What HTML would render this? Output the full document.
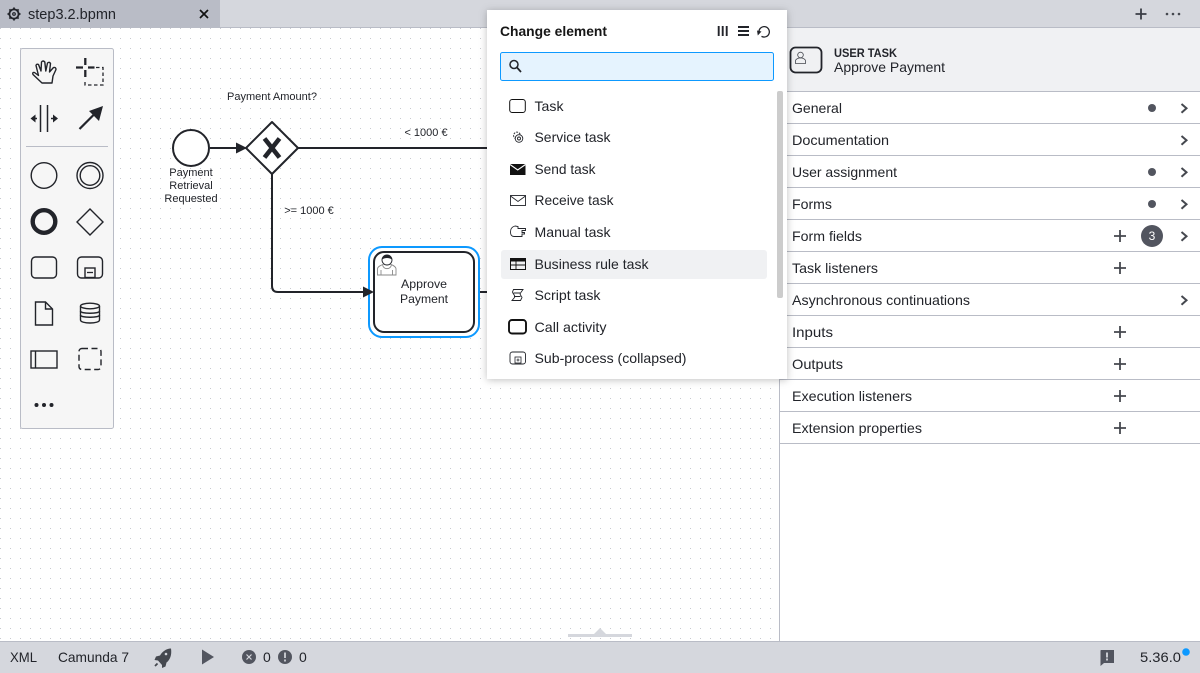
<!DOCTYPE html>
<html><head><meta charset="utf-8"><style>
html,body{margin:0;padding:0;width:1200px;height:673px;overflow:hidden;background:#fff}
svg{display:block;font-family:"Liberation Sans",sans-serif}
.p{font-size:14px;fill:#22242a}
.m{font-size:14px;fill:#22242a}
.b{font-size:11px;fill:#22242a}
.ic{fill:none;stroke:#22242a;stroke-width:1.4}
.bp{stroke:#22242a;stroke-width:2;fill:none;stroke-linejoin:round}
.sep{stroke:#b9bcc6;stroke-width:1}
.ch{fill:none;stroke:#45484f;stroke-width:2}
.pm{stroke:#45484f;stroke-width:1.8}
</style></head><body>
<svg width="1200" height="673" viewBox="0 0 1200 673" xmlns="http://www.w3.org/2000/svg">
<defs>
<pattern id="g" x="0" y="8" width="10" height="10" patternUnits="userSpaceOnUse"><rect x="0" y="0" width="1" height="1" fill="#c8cad0"/></pattern>
<filter id="s" x="-10%" y="-10%" width="120%" height="120%"><feDropShadow dx="0" dy="1" stdDeviation="4" flood-color="#000" flood-opacity=".25"/></filter>
</defs>
<rect width="1200" height="673" fill="#fff"/>
<rect x="0" y="28" width="779" height="613" fill="url(#g)"/>

<!-- tab bar -->
<rect width="1200" height="28" fill="#d5d7dd"/>
<rect width="220" height="28" fill="#b9bcc6"/>
<rect y="27" x="220" width="980" height="1" fill="#b9bcc6"/>
<g transform="translate(14,14)" fill="none" stroke="#22242a"><circle r="4.6" stroke-width="1.8"/><circle r="1.3" stroke-width="1.2"/><path d="M0-6.5V-4.5M0 6.5V4.5M-6.5 0H-4.5M6.500 0H4.500M-4.600-4.600L-3.200-3.200M4.600 4.600L3.200 3.200M-4.600 4.600L-3.200 3.200M4.600-4.600L3.200-3.200" stroke-width="1.8"/></g>
<text x="28" y="19" font-size="14.5" fill="#22242a" textLength="88" lengthAdjust="spacingAndGlyphs">step3.2.bpmn</text>
<path d="M200 10L208 18M208 10L200 18" stroke="#111" stroke-width="1.7"/>
<path d="M1135.500 14H1146.500M1141 8.500V19.500" stroke="#3a3d45" stroke-width="1.8"/>
<g fill="#45484f"><circle cx="1167" cy="14" r="1.3"/><circle cx="1173" cy="14" r="1.3"/><circle cx="1179" cy="14" r="1.3"/></g>

<!-- palette -->
<rect x="20.500" y="48.500" width="93" height="380" rx="2" fill="#f6f6f6" stroke="#b9bcc6"/>
<!-- hand -->
<path class="ic" d="M42 83L33 74.500Q32 72 34.500 72.500L38.500 75.500L36 65.500Q36.500 63.500 38.500 64.500L41 71L41.500 62Q43 60 44.800 62L45.800 71L47.500 63Q49.500 61.500 50.500 63.500L49.500 72L53.500 67.500Q56 67 56 69.500L53 76L52 83Z" stroke-linejoin="round" stroke-width="1.200"/>
<!-- lasso -->
<path d="M85.300 58V65M85.300 70V77M76 67.500H83M88 67.500H94.500" stroke="#22242a" stroke-width="2.300" fill="none"/>
<path d="M96 67.500H103V85H85V79.500" fill="none" stroke="#22242a" stroke-width="1.300" stroke-dasharray="3.500 2.500"/>
<!-- space -->
<path d="M40.500 105V132M47.500 105V132" stroke="#22242a" stroke-width="1.500"/>
<path d="M37 118.500H33" stroke="#22242a" stroke-width="1.500"/><path d="M30.500 118.500L35.500 114.500V122.500Z" fill="#22242a"/>
<path d="M51 118.500H55" stroke="#22242a" stroke-width="1.500"/><path d="M58 118.500L53 114.500V122.500Z" fill="#22242a"/>
<!-- connect -->
<path d="M79.500 129L96 112.500" stroke="#22242a" stroke-width="2.200"/><path d="M103 106L99 121L89 111Z" fill="#22242a"/>
<line x1="26" x2="108" y1="146.500" y2="146.500" stroke="#b9bcc6"/>
<circle cx="44" cy="175.500" r="12.800" class="ic"/>
<circle cx="90" cy="175.500" r="13" class="ic"/><circle cx="90" cy="175.500" r="9.800" class="ic"/>
<circle cx="44" cy="221.500" r="11.300" fill="none" stroke="#22242a" stroke-width="4.400"/>
<path class="ic" d="M90 209L103 222L90 235L77 222Z"/>
<rect x="31.500" y="257" width="25" height="21" rx="4" class="ic"/>
<rect x="77.500" y="257" width="25" height="21" rx="4" class="ic"/>
<rect x="85" y="268" width="10" height="9.500" class="ic"/><path d="M87 272.500H93" stroke="#22242a" stroke-width="1.300"/>
<path class="ic" d="M35.500 302V325H52.500V309L45.500 302Z"/><path class="ic" d="M45.500 302V309H52.500"/>
<path class="ic" d="M80.500 306V320C80.500 324 99.500 324 99.500 320V306"/><ellipse cx="90" cy="306" rx="9.500" ry="2.800" class="ic"/><path class="ic" d="M80.500 311C80.500 314 99.500 314 99.500 311M80.500 315C80.500 318 99.500 318 99.500 315"/>
<rect x="31" y="351" width="26" height="17" class="ic"/><path class="ic" d="M35.500 351V368"/>
<rect x="79" y="348.500" width="22" height="21" rx="3" fill="none" stroke="#22242a" stroke-width="1.400" stroke-dasharray="6 3.500"/>
<g fill="#22242a"><circle cx="36.500" cy="405" r="2"/><circle cx="44" cy="405" r="2"/><circle cx="51.500" cy="405" r="2"/></g>

<!-- diagram -->
<circle cx="191" cy="148" r="18" fill="#fff" stroke="#22242a" stroke-width="2"/>
<path class="bp" d="M210 148H237"/>
<path d="M272 122L298 148L272 174L246 148Z" fill="#fff" stroke="#22242a" stroke-width="2" stroke-linejoin="round"/>
<path d="M236 142.500L247 148L236 153.500Z" fill="#22242a"/>
<path d="M264.500 138.500L279.500 157.500M279.500 138.500L264.500 157.500" stroke="#22242a" stroke-width="4.600" fill="none"/>
<path class="bp" d="M298 148H490"/>
<path class="bp" d="M272 174V286Q272 292 278 292H365"/>
<path class="bp" d="M474 292H490"/>
<rect x="369" y="247" width="110" height="90" rx="13" fill="#fff" stroke="#0d99ff" stroke-width="2"/>
<rect x="374" y="252" width="100" height="80" rx="10" fill="#fff" stroke="#22242a" stroke-width="2"/>
<path d="M363 286.500L374 292L363 297.500Z" fill="#22242a"/>
<g fill="none" stroke="#8a8a8a" stroke-width=".9"><path d="M377.500 275V269C377.500 266 382 265 384 264H390C392 265 396 266 396 269V275Z"/><path d="M382.500 264.500C383 270 391 270 391.500 264.500M381 275V270M392.500 275V270"/></g>
<circle cx="387" cy="260" r="5" fill="#fff" stroke="#22242a" stroke-width=".9"/><path d="M382 259.500C382 253.500 392 253.500 392 259.500C389 257.500 385 257.500 382 259.500Z" fill="#22242a"/>
<g class="b" text-anchor="middle">
<text x="424" y="288" font-size="12" textLength="46" lengthAdjust="spacingAndGlyphs">Approve</text>
<text x="424" y="303" font-size="12" textLength="48" lengthAdjust="spacingAndGlyphs">Payment</text>
<text x="191" y="176">Payment</text><text x="191" y="189">Retrieval</text><text x="191" y="202">Requested</text>
<text x="272" y="100" textLength="90" lengthAdjust="spacingAndGlyphs">Payment Amount?</text>
<text x="426" y="136">&lt; 1000 €</text>
<text x="309" y="214">&gt;= 1000 €</text>
</g>

<!-- properties panel -->
<rect x="779" y="28" width="421" height="613" fill="#fff"/>
<rect x="779" y="28" width="1" height="613" fill="#b9bcc6"/>
<rect x="780" y="28" width="420" height="63" fill="#f0f1f3"/>
<rect x="790.500" y="47.500" width="31" height="25" rx="5" fill="none" stroke="#22242a" stroke-width="1.800"/>
<g fill="none" stroke="#45484f" stroke-width=".8"><circle cx="800.500" cy="55" r="2.800"/><path d="M795.500 63.500V61C795.500 59 798 58.500 799 58H802C803 58.500 805.500 59 805.500 61V63.500Z"/></g>
<text x="834" y="57" font-size="12" font-weight="700" fill="#22242a" textLength="63" lengthAdjust="spacingAndGlyphs">USER TASK</text>
<text x="834" y="72" font-size="14" fill="#22242a" textLength="111" lengthAdjust="spacingAndGlyphs">Approve Payment</text>
<g class="sep"><line x1="780" x2="1200" y1="91.500" y2="91.500"/><line x1="780" x2="1200" y1="123.500" y2="123.500"/><line x1="780" x2="1200" y1="155.500" y2="155.500"/><line x1="780" x2="1200" y1="187.500" y2="187.500"/><line x1="780" x2="1200" y1="219.500" y2="219.500"/><line x1="780" x2="1200" y1="251.500" y2="251.500"/><line x1="780" x2="1200" y1="283.500" y2="283.500"/><line x1="780" x2="1200" y1="315.500" y2="315.500"/><line x1="780" x2="1200" y1="347.500" y2="347.500"/><line x1="780" x2="1200" y1="379.500" y2="379.500"/><line x1="780" x2="1200" y1="411.500" y2="411.500"/><line x1="780" x2="1200" y1="443.500" y2="443.500"/></g>
<g class="p">
<text x="792" y="113" textLength="50" lengthAdjust="spacingAndGlyphs">General</text>
<text x="792" y="145" textLength="97" lengthAdjust="spacingAndGlyphs">Documentation</text>
<text x="792" y="177" textLength="105" lengthAdjust="spacingAndGlyphs">User assignment</text>
<text x="792" y="209" textLength="40" lengthAdjust="spacingAndGlyphs">Forms</text>
<text x="792" y="241" textLength="70" lengthAdjust="spacingAndGlyphs">Form fields</text>
<text x="792" y="273" textLength="86" lengthAdjust="spacingAndGlyphs">Task listeners</text>
<text x="792" y="305" textLength="178" lengthAdjust="spacingAndGlyphs">Asynchronous continuations</text>
<text x="792" y="337" textLength="41" lengthAdjust="spacingAndGlyphs">Inputs</text>
<text x="792" y="369" textLength="51" lengthAdjust="spacingAndGlyphs">Outputs</text>
<text x="792" y="401" textLength="120" lengthAdjust="spacingAndGlyphs">Execution listeners</text>
<text x="792" y="433" textLength="130" lengthAdjust="spacingAndGlyphs">Extension properties</text>
</g>
<g fill="#52555f"><circle cx="1152" cy="108" r="4"/><circle cx="1152" cy="172" r="4"/><circle cx="1152" cy="204" r="4"/><circle cx="1152" cy="236" r="11"/></g>
<text x="1152" y="240" font-size="12" fill="#fff" text-anchor="middle">3</text>
<g class="ch"><path d="M1181.500 104L1186.500 108.300L1181.500 112.700"/><path d="M1181.500 136L1186.500 140.300L1181.500 144.700"/><path d="M1181.500 168L1186.500 172.300L1181.500 176.700"/><path d="M1181.500 200L1186.500 204.300L1181.500 208.700"/><path d="M1181.500 232L1186.500 236.300L1181.500 240.700"/><path d="M1181.500 296L1186.500 300.300L1181.500 304.700"/></g>
<g class="pm"><path d="M1114 236H1126M1120 230V242"/><path d="M1114 268H1126M1120 262V274"/><path d="M1114 332H1126M1120 326V338"/><path d="M1114 364H1126M1120 358V370"/><path d="M1114 396H1126M1120 390V402"/><path d="M1114 428H1126M1120 422V434"/></g>

<!-- popup -->
<rect x="487" y="10" width="300" height="369" fill="#fff" filter="url(#s)"/>
<text x="500" y="36" font-size="14" font-weight="700" fill="#161616" textLength="107" lengthAdjust="spacingAndGlyphs">Change element</text>
<path d="M718.700 26V36M722.700 26V36M726.700 26V36" stroke="#22242a" stroke-width="1.900"/>
<path d="M738 27H749M738 31H749M738 35H749" stroke="#22242a" stroke-width="2"/>
<path d="M761.500 36.300A5.200 5.200 0 1 0 759 32.500" fill="none" stroke="#22242a" stroke-width="1.300"/><path d="M757 30.500L761.500 31.500L757.800 35.500Z" fill="#22242a"/>
<rect x="500.500" y="52.500" width="273" height="28" rx="2" fill="#e5f3fe" stroke="#0d99ff"/>
<circle cx="514" cy="64.500" r="4" fill="none" stroke="#22242a" stroke-width="1.500"/><path d="M517 67.500L521 72" stroke="#22242a" stroke-width="1.700"/>
<rect x="777" y="91" width="6" height="207" rx="2" fill="#cccccc"/>
<rect x="501" y="250" width="266" height="29" rx="3" fill="#f0f1f3"/>
<g class="m">
<text x="534.500" y="111" textLength="29" lengthAdjust="spacingAndGlyphs">Task</text>
<text x="534.500" y="142" textLength="76" lengthAdjust="spacingAndGlyphs">Service task</text>
<text x="534.500" y="174" textLength="61" lengthAdjust="spacingAndGlyphs">Send task</text>
<text x="534.500" y="205" textLength="79" lengthAdjust="spacingAndGlyphs">Receive task</text>
<text x="534.500" y="237" textLength="76" lengthAdjust="spacingAndGlyphs">Manual task</text>
<text x="534.500" y="269" textLength="114" lengthAdjust="spacingAndGlyphs">Business rule task</text>
<text x="534.500" y="300" textLength="66" lengthAdjust="spacingAndGlyphs">Script task</text>
<text x="534.500" y="332" textLength="72" lengthAdjust="spacingAndGlyphs">Call activity</text>
<text x="534.500" y="363" textLength="152" lengthAdjust="spacingAndGlyphs">Sub-process (collapsed)</text>
</g>
<rect x="509.700" y="99.500" width="15.600" height="13" rx="2.500" fill="none" stroke="#111" stroke-width="1"/>
<g fill="none" stroke="#22242a" stroke-width=".9"><circle cx="517" cy="135.500" r="3.400" stroke-dasharray="2 1"/><circle cx="519" cy="138.500" r="3.800" fill="#fff"/><circle cx="519" cy="138.500" r="1.500"/></g>
<rect x="510" y="164" width="15.500" height="11" fill="#111"/><path d="M510 164.500L517.700 170L525.500 164.500" fill="none" stroke="#fff" stroke-width="1.100"/>
<rect x="510.500" y="195.500" width="15" height="10" fill="none" stroke="#22242a" stroke-width=".9"/><path d="M510.500 196L518 201.500L525.500 196" fill="none" stroke="#22242a" stroke-width=".9"/>
<path d="M510.500 232C510.500 228 513 226.500 515 226L518 226.500V228.500H525.500V230.500H522V232.500H524.500V234H522V236.500H514C512 236.500 510.500 235 510.500 232Z" fill="none" stroke="#22242a" stroke-width=".9"/>
<rect x="510.500" y="258.500" width="15" height="11" fill="none" stroke="#111" stroke-width="1"/><rect x="510" y="258" width="16" height="3.500" fill="#111"/><path d="M510.500 265H525.500M516 261V269.500" stroke="#111" stroke-width=".9"/>
<path d="M513.500 289.500H523L520.500 293C519 295 522 296 522 297.500L520.500 300.500H512L514.500 297.500C516 295.500 512.500 294 512.500 292ZM513.500 293H520M514 296.500H520.500" fill="none" stroke="#22242a" stroke-width=".9"/>
<rect x="509" y="320" width="17" height="13.500" rx="3" fill="none" stroke="#111" stroke-width="1.900"/>
<rect x="510" y="352" width="15.500" height="12" rx="2.500" fill="none" stroke="#22242a" stroke-width=".9"/>
<rect x="515" y="357" width="6" height="6" fill="none" stroke="#22242a" stroke-width=".8"/><path d="M516.500 360H519.500M518 358.500V361.500" stroke="#22242a" stroke-width=".8"/>

<!-- status bar -->
<path d="M568 637H632V634H606L600 628L594 634H568Z" fill="#d5d7dd"/>
<rect y="641" width="1200" height="32" fill="#d5d7dd"/>
<rect y="641" width="1200" height="1" fill="#b9bcc6"/>
<g font-size="14" fill="#22242a">
<text x="10" y="662" textLength="27" lengthAdjust="spacingAndGlyphs">XML</text>
<text x="58" y="662" textLength="71" lengthAdjust="spacingAndGlyphs">Camunda 7</text>
<text x="263" y="662">0</text><text x="299" y="662">0</text>
<text x="1140" y="662" textLength="41" lengthAdjust="spacingAndGlyphs">5.36.0</text>
</g>
<path d="M171 648.500C166 648.500 162 652 160 655.500L156 656.500L154.500 660L158 660.500L162 665L162 668L165.500 666.500L166.500 662.500C170 660 172 655 171 648.500Z" fill="#45484f"/><circle cx="166" cy="654" r="1.300" fill="#d5d7dd"/><path d="M157.500 663.500L155 666" stroke="#45484f" stroke-width="1.800"/>
<path d="M202 649.500L214 657L202 664.500Z" fill="#52555f"/>
<circle cx="249" cy="657" r="7" fill="#52555f"/><path d="M246.500 654.500L251.500 659.500M251.500 654.500L246.500 659.500" stroke="#d5d7dd" stroke-width="1.200"/>
<circle cx="285" cy="657" r="7" fill="#52555f"/><path d="M285 652.500V658M285 659.500V661.500" stroke="#d5d7dd" stroke-width="1.700"/>
<path d="M1101 650H1114V663H1104L1100.500 666V651Q1100.500 650 1101 650Z" fill="#52555f"/><path d="M1107 652.500V657.500M1107 658.500V660.500" stroke="#d5d7dd" stroke-width="1.800"/>
<circle cx="1186" cy="652" r="3.800" fill="#0d99ff"/>
</svg>
</body></html>
